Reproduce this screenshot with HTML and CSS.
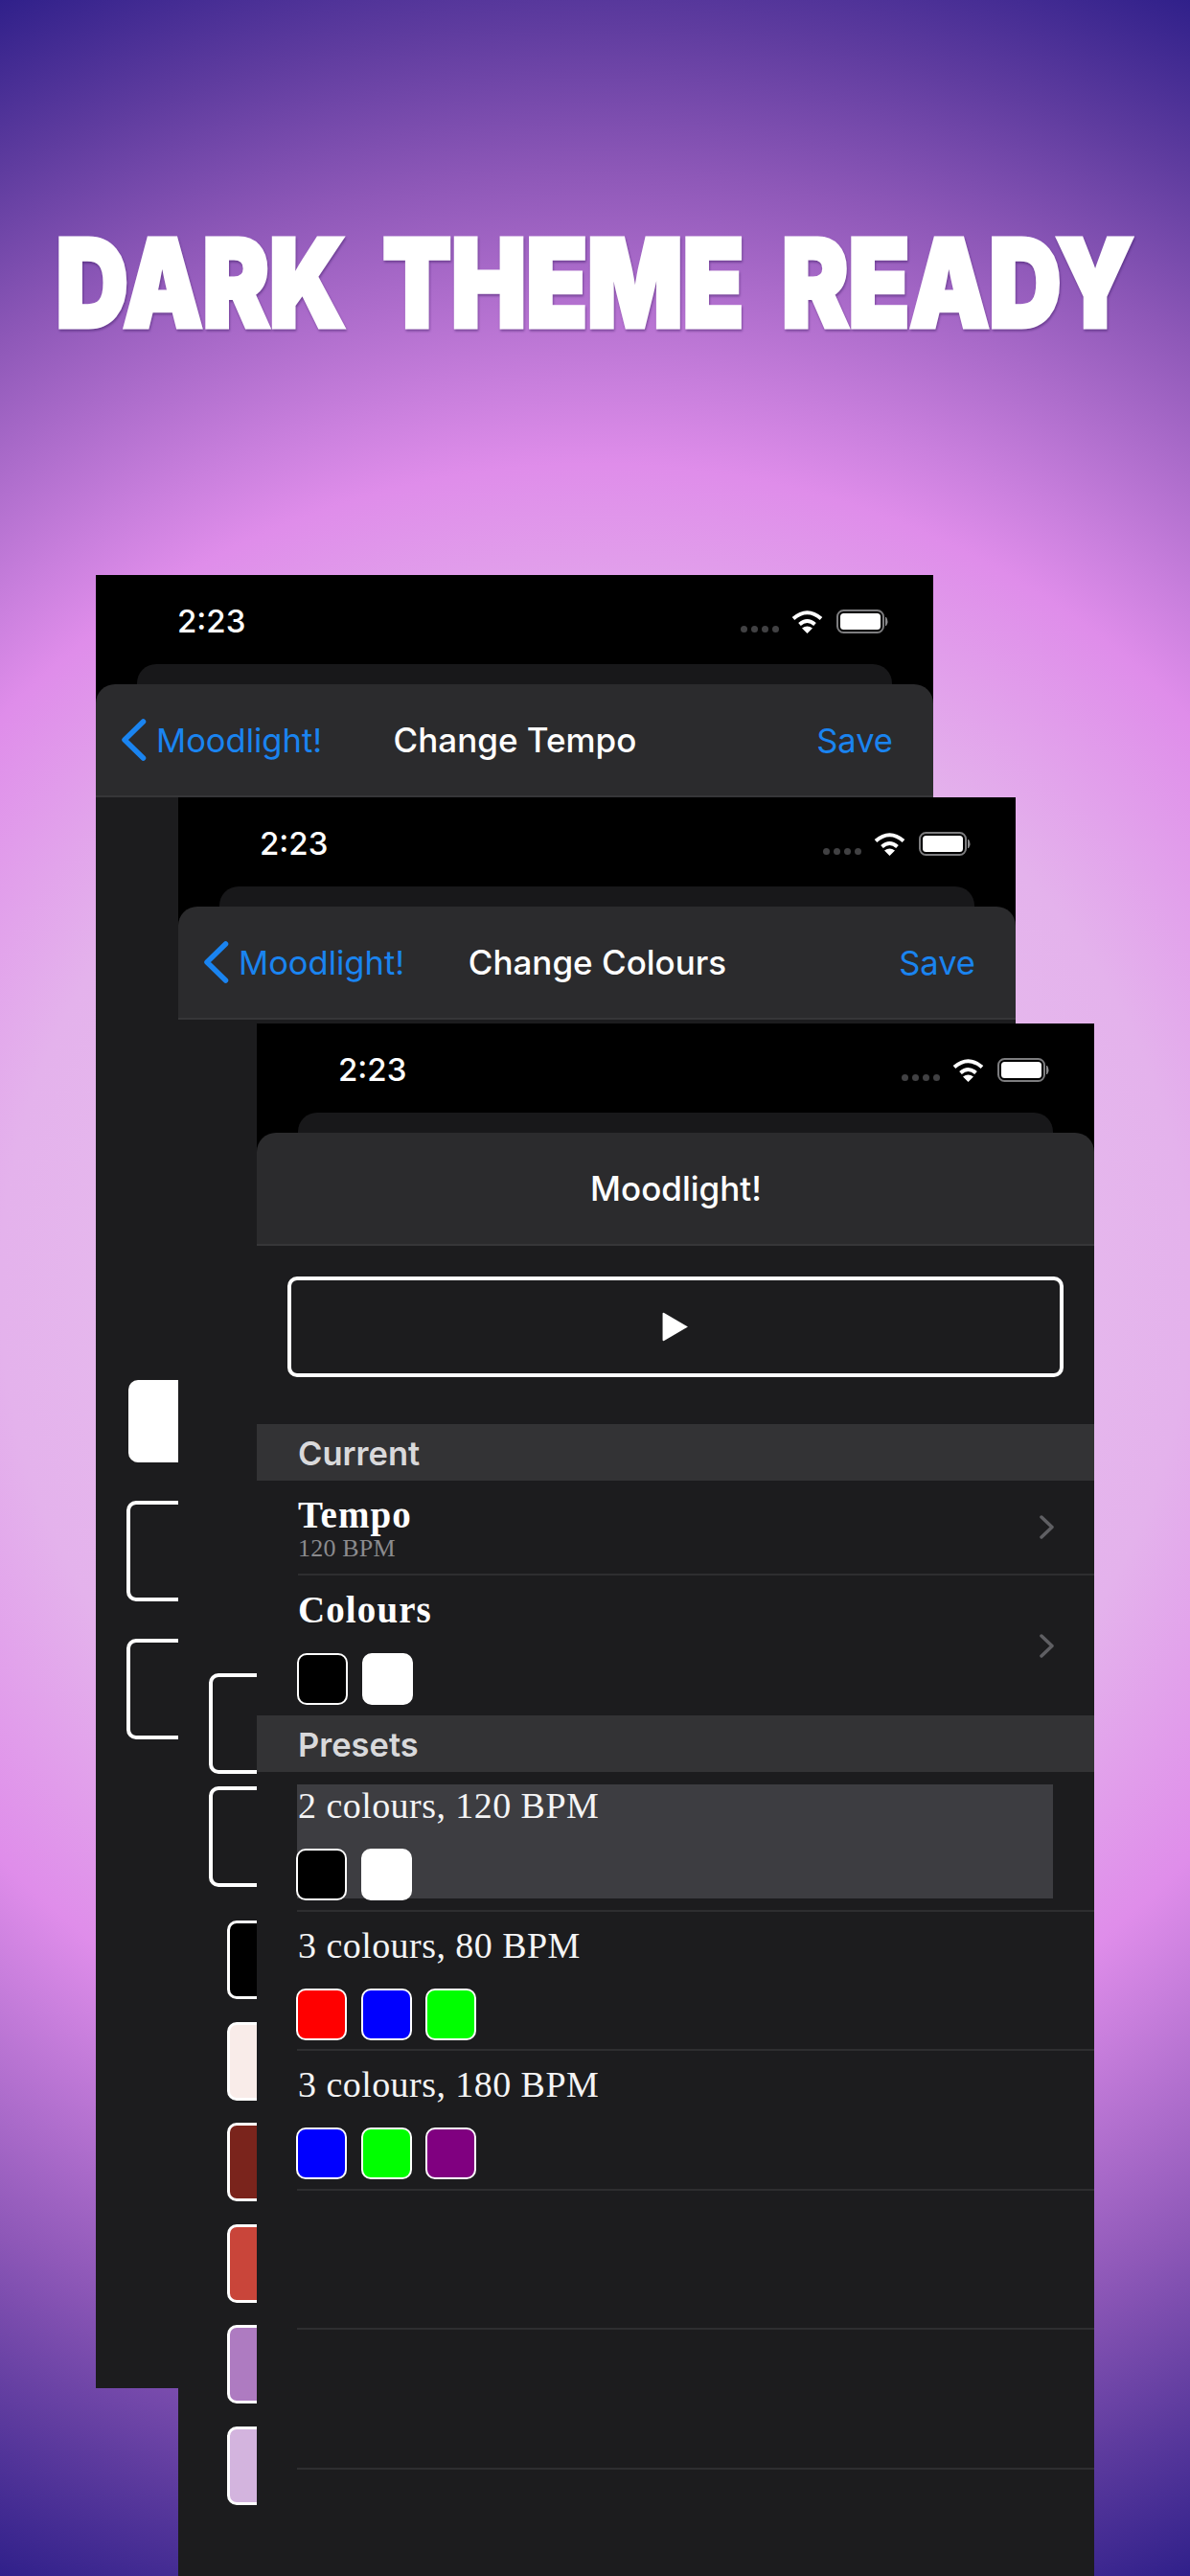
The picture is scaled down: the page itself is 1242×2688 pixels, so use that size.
FILE: index.html
```html
<!DOCTYPE html>
<html lang="en">
<head>
    <meta charset="UTF-8">
    <meta name="viewport" content="width=device-width, initial-scale=1.0">
    <title>Moodlight! - Dark theme ready</title>
    <link rel="stylesheet" href="styles.css">
</head>
<body>
    <svg class="sprite" width="0" height="0">
        <symbol id="wifi" viewBox="0 0 33 25">
            <path d="M2 9.5Q16.5-3 31 9.5" fill="none" stroke="#fff" stroke-width="4"/>
            <path d="M8.500 15.500Q16.500 8.500 24.500 15.500" fill="none" stroke="#fff" stroke-width="4"/>
            <path d="M16.500 25L11 19.500Q16.500 15.500 22 19.500Z" fill="#fff"/>
        </symbol>
        <symbol id="battery" viewBox="0 0 55 25">
            <rect x="1" y="1" width="48" height="23" rx="6.500" fill="none" stroke="#7d7d7f" stroke-width="2"/>
            <rect x="4" y="4" width="42" height="17" rx="3.500" fill="#fff"/>
            <path d="M51 8L52 8Q55 12.500 52 17L51 17Z" fill="#8a8a8c"/>
        </symbol>
        <symbol id="back" viewBox="0 0 27 44">
            <path d="M23.500 3L4 22L23.500 41" fill="none" stroke="#1a84f0" stroke-width="5.500" stroke-linecap="round" stroke-linejoin="round"/>
        </symbol>
        <symbol id="chevron" viewBox="0 0 15 25">
            <path d="M2 2L13 12.500L2 23" fill="none" stroke="#5f5f63" stroke-width="3.500" stroke-linecap="round" stroke-linejoin="round"/>
        </symbol>
    </svg>

    <div class="stage">
        <h1 class="headline"><span>DARK THEME READY</span></h1>

        <!-- Change Tempo -->
        <section class="phone phone-tempo">
            <div class="status-bar">
                <span class="time">2:23</span>
                <div class="status-icons">
                    <span class="signal"><i></i><i></i><i></i><i></i></span>
                    <svg class="icon-wifi"><use href="#wifi"/></svg>
                    <svg class="icon-battery"><use href="#battery"/></svg>
                </div>
            </div>
            <div class="sheet-behind"></div>
            <header class="nav">
                <a class="nav-back"><svg class="icon-back"><use href="#back"/></svg>Moodlight!</a>
                <span class="nav-title">Change Tempo</span>
                <a class="nav-save">Save</a>
            </header>
            <div class="screen tempo-body">
                <div class="tempo-preview"></div>
                <div class="outline-button"></div>
                <div class="outline-button"></div>
            </div>
        </section>

        <!-- Change Colours -->
        <section class="phone phone-colours">
            <div class="status-bar">
                <span class="time">2:23</span>
                <div class="status-icons">
                    <span class="signal"><i></i><i></i><i></i><i></i></span>
                    <svg class="icon-wifi"><use href="#wifi"/></svg>
                    <svg class="icon-battery"><use href="#battery"/></svg>
                </div>
            </div>
            <div class="sheet-behind"></div>
            <header class="nav">
                <a class="nav-back"><svg class="icon-back"><use href="#back"/></svg>Moodlight!</a>
                <span class="nav-title">Change Colours</span>
                <a class="nav-save">Save</a>
            </header>
            <div class="screen colours-body">
                <div class="outline-button"></div>
                <div class="outline-button"></div>
                <div class="colour-list">
                    <div class="colour-bar black"></div>
                    <div class="colour-bar linen"></div>
                    <div class="colour-bar brown"></div>
                    <div class="colour-bar brick"></div>
                    <div class="colour-bar orchid"></div>
                    <div class="colour-bar lilac"></div>
                </div>
            </div>
        </section>

        <!-- Main screen -->
        <section class="phone phone-main">
            <div class="status-bar">
                <span class="time">2:23</span>
                <div class="status-icons">
                    <span class="signal"><i></i><i></i><i></i><i></i></span>
                    <svg class="icon-wifi"><use href="#wifi"/></svg>
                    <svg class="icon-battery"><use href="#battery"/></svg>
                </div>
            </div>
            <div class="sheet-behind"></div>
            <header class="nav">
                <span></span>
                <span class="nav-title">Moodlight!</span>
                <span></span>
            </header>

            <div class="screen">
                <div class="play-wrap">
                    <div class="play-button">
                        <svg class="icon-play" viewBox="0 0 26 30"><path d="M2 1.500L25 15L2 28.500Q0.500 29 0.500 27.500V2.500Q0.500 1 2 1.500Z" fill="#fff"/></svg>
                    </div>
                </div>

                <h2 class="section-head">Current</h2>
                <div class="setting setting-tempo">
                    <div class="setting-text">
                        <div class="setting-name">Tempo</div>
                        <div class="setting-sub">120 BPM</div>
                    </div>
                    <svg class="icon-chevron"><use href="#chevron"/></svg>
                </div>
                <div class="setting setting-colours">
                    <div class="setting-text">
                        <div class="setting-name">Colours</div>
                        <div class="swatches">
                            <span class="swatch black"></span>
                            <span class="swatch white"></span>
                        </div>
                    </div>
                    <svg class="icon-chevron"><use href="#chevron"/></svg>
                </div>

                <h2 class="section-head">Presets</h2>
                <div class="preset selected">
                    <div class="preset-inner">
                        <div class="preset-name">2 colours, 120 BPM</div>
                        <div class="swatches">
                            <span class="swatch black"></span>
                            <span class="swatch white"></span>
                        </div>
                    </div>
                </div>
                <div class="preset">
                    <div class="preset-inner">
                        <div class="preset-name">3 colours, 80 BPM</div>
                        <div class="swatches">
                            <span class="swatch red"></span>
                            <span class="swatch blue"></span>
                            <span class="swatch green"></span>
                        </div>
                    </div>
                </div>
                <div class="preset">
                    <div class="preset-inner">
                        <div class="preset-name">3 colours, 180 BPM</div>
                        <div class="swatches">
                            <span class="swatch blue"></span>
                            <span class="swatch green"></span>
                            <span class="swatch purple"></span>
                        </div>
                    </div>
                </div>
                <div class="preset"></div>
                <div class="preset"></div>
            </div>
        </section>
    </div>
</body>
</html>
```

FILE: styles.css
```css
body {
    margin: 0;
    font-family: Inter, "Liberation Sans", sans-serif;
    color: white;
}

.sprite {
    display: block;
    height: 0;
}

.stage {
    position: relative;
    width: 1242px;
    height: 2688px;
    overflow: hidden;
    background: radial-gradient(circle 1480px at 50% 50%,
        #eccdf0 0,
        #e4b2ec 621px,
        #df8dea 860px,
        #c97fdd 944px,
        #8e58b8 1164px,
        #5f3c9f 1319px,
        #30208a 1480px);
}

.headline {
    display: flex;
    justify-content: center;
    margin: 0;
    padding-top: 226px;
    font-family: Inter, "Liberation Sans", sans-serif;
    font-size: 127px;
    font-weight: 900;
    line-height: 138px;
    word-spacing: 23px;
    white-space: nowrap;
}

.headline span {
    flex: none;
    transform: scaleX(0.82);
    -webkit-text-stroke: 5px white;
    filter: drop-shadow(1.500px 2px 1px rgba(50, 20, 90, 0.45));
}

/* the three screens are loose windows stacked on the backdrop */
.phone {
    position: absolute;
    display: flex;
    flex-direction: column;
    width: 874px;
    height: 1892px;
    overflow: hidden;
    background-color: black;
}

.phone-tempo {
    left: 100px;
    top: 600px;
}

.phone-colours {
    left: 186px;
    top: 832px;
}

.phone-main {
    left: 268px;
    top: 1068px;
}

.screen {
    flex: 1;
    box-sizing: border-box;
    background-color: #1c1c1e;
}

.status-bar {
    display: flex;
    align-items: center;
    height: 93px;
    flex: none;
    padding: 3px 46px 0 85px;
    box-sizing: border-box;
}

.time {
    font-size: 33px;
    font-weight: 550;
}

.status-icons {
    display: flex;
    align-items: center;
    margin-left: auto;
}

.signal {
    display: flex;
    gap: 4px;
    margin-top: 16px;
    margin-right: 13px;
}

.signal i {
    width: 7px;
    height: 7px;
    border-radius: 50%;
    background-color: #414143;
}

.icon-wifi {
    width: 33px;
    height: 25px;
    margin-right: 14px;
}

.icon-battery {
    width: 55px;
    height: 25px;
}

.sheet-behind {
    flex: none;
    height: 21px;
    margin: 0 43px;
    border-radius: 20px 20px 0 0;
    background-color: #18181a;
}

.nav {
    display: grid;
    flex: none;
    grid-template-columns: 1fr auto 1fr;
    align-items: center;
    height: 118px;
    padding: 0 42px 0 43px;
    box-sizing: border-box;
    border-radius: 20px 20px 0 0;
    border-bottom: 2px solid #363638;
    background-color: #2b2b2d;
    font-size: 34.500px;
}

.nav-back {
    display: flex;
    align-items: center;
    margin-left: -17px;
    color: #1a84f0;
}

.icon-back {
    width: 27px;
    height: 44px;
    margin-right: 10px;
}

.nav-title {
    font-size: 35px;
    font-weight: 550;
}

.nav-save {
    text-align: right;
    color: #1a84f0;
}

.outline-button {
    height: 105px;
    box-sizing: border-box;
    border: 4px solid white;
    border-radius: 10px;
}

.tempo-body {
    padding: 608px 32px 0 32px;
}

.tempo-preview {
    height: 86px;
    margin: 0 2px 40px 2px;
    border-radius: 10px;
    background-color: white;
}

.tempo-body .outline-button + .outline-button {
    margin-top: 39px;
}

.colours-body {
    padding: 682px 32px 0 32px;
}

.colours-body .outline-button + .outline-button {
    margin-top: 13px;
}

.colour-list {
    display: flex;
    flex-direction: column;
    gap: 23.500px;
    margin: 35px 0 0 19px;
}

.colour-bar {
    height: 82px;
    box-sizing: border-box;
    border: 3px solid white;
    border-radius: 10px;
}

.play-wrap {
    padding: 32px 32px 49px 32px;
}

.play-button {
    display: flex;
    align-items: center;
    justify-content: center;
    height: 105px;
    box-sizing: border-box;
    border: 4px solid white;
    border-radius: 10px;
}

.icon-play {
    width: 28px;
    height: 33px;
}

.section-head {
    margin: 0;
    height: 59px;
    padding-left: 43px;
    background-color: #333335;
    color: #d9d9db;
    font-size: 34.500px;
    font-weight: 600;
    line-height: 61px;
}

.setting {
    display: flex;
    align-items: center;
    margin-left: 43px;
    padding-right: 42px;
    box-sizing: border-box;
}

.setting-tempo {
    height: 99px;
    border-bottom: 2px solid #2e2e30;
}

.setting-tempo .setting-text {
    margin-top: 2px;
}

.setting-colours {
    height: 146px;
}

.setting-colours .setting-text {
    margin-top: 3px;
}

.setting-text {
    flex: 1;
}

.setting-name {
    font-family: "Liberation Serif", serif;
    font-size: 39px;
    font-weight: bold;
    line-height: 42px;
    letter-spacing: 1.100px;
}

.setting-sub {
    font-family: "Liberation Serif", serif;
    font-size: 26px;
    line-height: 28px;
    letter-spacing: 0.200px;
    color: #8b8b8e;
}

.setting-colours .swatches {
    margin-top: 24px;
}

.icon-chevron {
    width: 15px;
    height: 25px;
}

.swatches {
    display: flex;
    gap: 16.500px;
}

.swatch {
    width: 53px;
    height: 54px;
    margin-left: -1px;
    margin-right: -1px;
    box-sizing: border-box;
    border: 2.500px solid white;
    border-radius: 10px;
}

.black { background-color: black; }
.white { background-color: white; }
.red { background-color: #ff0000; }
.blue { background-color: #0000ff; }
.green { background-color: #00ff00; }
.purple { background-color: #800080; }
.linen { background-color: #f9ece9; }
.brown { background-color: #7a241c; }
.brick { background-color: #c9453a; }
.orchid { background-color: #ae7bc1; }
.lilac { background-color: #d3b4de; }

.preset {
    height: 145.500px;
    margin-left: 42px;
    padding-top: 13px;
    box-sizing: border-box;
    border-bottom: 2px solid #2e2e30;
}

.preset-inner {
    height: 119px;
}

.selected .preset-inner {
    margin-right: 43px;
    background-color: #3d3d41;
}

.preset-name {
    height: 67px;
    padding-left: 1px;
    font-family: "Liberation Serif", serif;
    font-size: 38px;
    line-height: 44px;
    letter-spacing: 0.450px;
    color: #f4f4f5;
}
```
